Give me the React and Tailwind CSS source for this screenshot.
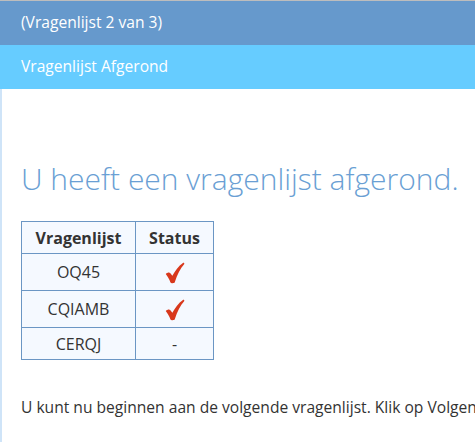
const rows = [
  { name: "OQ45", done: true },
  { name: "CQIAMB", done: true },
  { name: "CERQJ", done: false },
];

function Check() {
  return (
    <svg width="20" height="22" viewBox="0 0 18 20" className="inline-block align-middle">
      <path
        d="M0.6 11 C2 9.6 3.8 9.2 4.8 10.2 L6.6 12.6 C9 7.8 12.2 3.6 16.2 0.8 C17 0.4 17.9 1.2 17.3 2 C13.8 5.9 11 11.4 8.8 18.4 C8.4 19.4 5.4 19.5 4.9 18.6 C3.8 15.8 2.4 13.2 0.6 11 Z"
        fill="#d8381c"
      />
    </svg>
  );
}

export default function App() {
  return (
    <div className="h-[442px] w-[475px] overflow-hidden bg-white font-['Open_Sans',sans-serif]">
      <div className="h-px bg-[#bdbdbd]"></div>
      <div className="h-[44px] bg-[#6699cc] px-[21px] flex items-center text-white text-[15.6px]">
        (Vragenlijst 2 van 3)
      </div>
      <div className="h-[44px] bg-[#66ccff] px-[21px] flex items-center text-white text-[15.6px]">
        Vragenlijst Afgerond
      </div>
      <div className="border-l-2 border-[#cfe4f8] h-full pl-[19px] pt-[70px]">
        <h1 className="text-[30px] font-light text-[#6a9fd4] leading-[40px] whitespace-nowrap">
          U heeft een vragenlijst afgerond.
        </h1>
        <table className="mt-[22px] border-collapse bg-[#f5f9ff] text-[16px] text-[#333]">
          <thead>
            <tr className="h-[32px]">
              <th className="border border-[#6b96c4] w-[114px] font-bold">Vragenlijst</th>
              <th className="border border-[#6b96c4] w-[78px] font-bold">Status</th>
            </tr>
          </thead>
          <tbody>
            {rows.map((r) => (
              <tr key={r.name} className={r.done ? "h-[37px]" : "h-[32px]"}>
                <td className="border border-[#6b96c4] text-center">{r.name}</td>
                <td className="border border-[#6b96c4] text-center">
                  {r.done ? <Check /> : "-"}
                </td>
              </tr>
            ))}
          </tbody>
        </table>
        <p className="mt-[36px] text-[15.6px] text-[#333] whitespace-nowrap">
          U kunt nu beginnen aan de volgende vragenlijst. Klik op Volgende om verder te gaan.
        </p>
      </div>
    </div>
  );
}
